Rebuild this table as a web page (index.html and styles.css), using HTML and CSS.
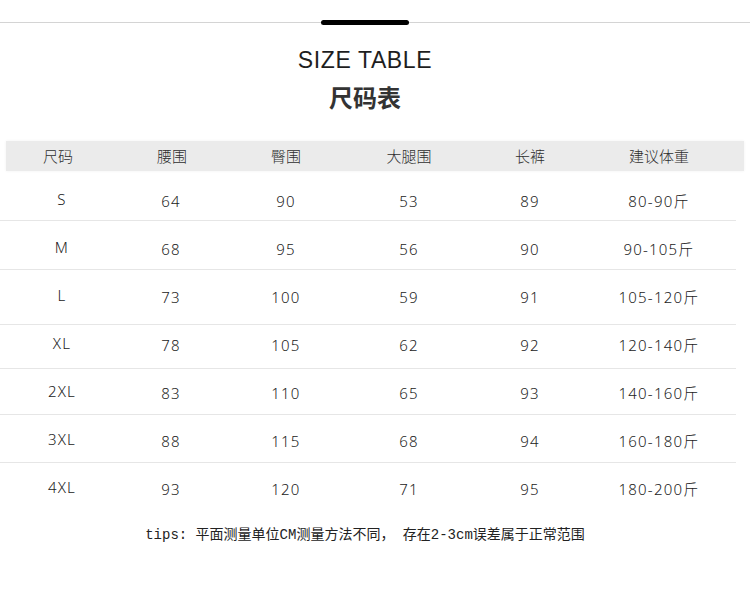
FILE: index.html
```html
<!DOCTYPE html>
<html lang="zh">
<head>
<meta charset="utf-8">
<title>SIZE TABLE 尺码表</title>
<link rel="stylesheet" href="styles.css">
</head>
<body>
<div class="page">
  <div class="rule"><span class="rule-bar"></span></div>
  <div class="titles">
    <div class="title-en">SIZE TABLE</div>
    <div class="title-cn">尺码表</div>
  </div>
  <div class="table">
    <div class="head">
      <div>尺码</div><div>腰围</div><div>臀围</div><div>大腿围</div><div>长裤</div><div>建议体重</div>
    </div>
    <div class="row"><div class="size">S</div><div>64</div><div>90</div><div>53</div><div>89</div><div>80-90斤</div></div>
    <div class="row"><div class="size">M</div><div>68</div><div>95</div><div>56</div><div>90</div><div>90-105斤</div></div>
    <div class="row"><div class="size">L</div><div>73</div><div>100</div><div>59</div><div>91</div><div>105-120斤</div></div>
    <div class="row"><div class="size">XL</div><div>78</div><div>105</div><div>62</div><div>92</div><div>120-140斤</div></div>
    <div class="row"><div class="size">2XL</div><div>83</div><div>110</div><div>65</div><div>93</div><div>140-160斤</div></div>
    <div class="row"><div class="size">3XL</div><div>88</div><div>115</div><div>68</div><div>94</div><div>160-180斤</div></div>
    <div class="row"><div class="size">4XL</div><div>93</div><div>120</div><div>71</div><div>95</div><div>180-200斤</div></div>
  </div>
  <p class="tips">tips: 平面测量单位CM测量方法不同， 存在2-3cm误差属于正常范围</p>
</div>
</body>
</html>
```
FILE: styles.css
```css
* { box-sizing: border-box; }
html, body { margin: 0; padding: 0; background: #fff; }
body {
  font-family: "Noto Sans CJK SC", "Liberation Sans", sans-serif;
  color: #333;
}
.page { width: 750px; height: 601px; overflow: hidden; }

.rule {
  position: relative;
  margin-top: 22px;
  height: 1px;
  background: #d4d4d4;
}
.rule-bar {
  position: absolute;
  left: 321px;
  top: -2px;
  width: 88px;
  height: 5px;
  border-radius: 3px;
  background: #000;
}

.titles {
  display: flex;
  flex-direction: column;
  align-items: center;
  padding-right: 20px;
  padding-top: 23px;
}
.title-en {
  font-family: "Liberation Sans", Arial, sans-serif;
  font-size: 23px;
  letter-spacing: 0.6px;
  line-height: 28px;
  color: #1e1e1e;
}
.title-cn {
  margin-top: 8px;
  font-size: 24px;
  font-weight: 700;
  line-height: 30px;
  color: #333;
}

.table { margin-top: 29px; }
.head {
  display: grid;
  grid-template-columns: 104px 124px 104px 142px 100px 158px 1fr;
  margin-left: 6px;
  width: 738px;
  height: 30px;
  line-height: 30px;
  background: #ebebeb;
  box-shadow: 0 0 3px rgba(0,0,0,0.06);
  font-size: 15px;
  font-weight: 300;
  color: #2e2e2e;
  text-align: center;
}
.row {
  display: grid;
  grid-template-columns: 124px 94px 136px 110px 132px 126px 1fr;
  width: 736px;
  border-bottom: 1px solid #e6e6e6;
  font-family: "Noto Sans", "Liberation Sans", "Noto Sans CJK SC", sans-serif;
  font-size: 15px;
  font-weight: 300;
  letter-spacing: 1.2px;
  line-height: 20px;
  text-align: center;
  color: #222;
}
.row > div { padding-top: 2px; }
.row > .size { padding-top: 0; }
.row:nth-child(2) { height: 50px; padding-top: 18px; }
.row:nth-child(3) { height: 49px; padding-top: 16px; }
.row:nth-child(4) { height: 55px; padding-top: 15px; }
.row:nth-child(5) { height: 44px; padding-top: 8px; }
.row:nth-child(6) { height: 46px; padding-top: 12px; }
.row:nth-child(7) { height: 48px; padding-top: 14px; }
.row:nth-child(8) { height: 48px; padding-top: 14px; border-bottom: none; }

.tips {
  margin: 14px 0 0;
  padding-right: 20px;
  text-align: center;
  font-family: "Liberation Mono", "Noto Sans CJK SC", monospace;
  font-size: 14px;
  line-height: 20px;
  color: #222;
}
```
